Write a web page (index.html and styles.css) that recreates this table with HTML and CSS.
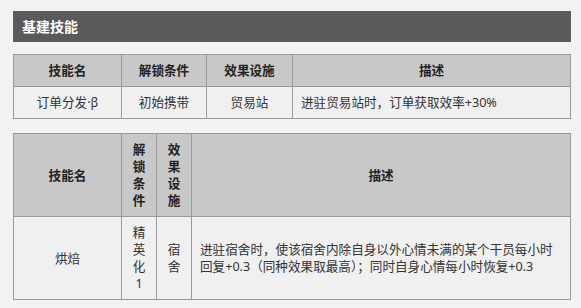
FILE: index.html
```html
<!DOCTYPE html>
<html lang="zh">
<head>
<meta charset="utf-8">
<link rel="stylesheet" href="styles.css">
</head>
<body>
<div class="page">
  <div class="title-bar">基建技能</div>
  <table class="skills t1">
    <thead>
      <tr>
        <th class="c-name">技能名</th>
        <th class="c-cond">解锁条件</th>
        <th class="c-fac">效果设施</th>
        <th>描述</th>
      </tr>
    </thead>
    <tbody>
      <tr>
        <td>订单分发·β</td>
        <td>初始携带</td>
        <td>贸易站</td>
        <td class="desc">进驻贸易站时，订单获取效率+30%</td>
      </tr>
    </tbody>
  </table>
  <table class="skills t2">
    <thead>
      <tr>
        <th class="c-name">技能名</th>
        <th class="c-narrow">解锁条件</th>
        <th class="c-narrow">效果设施</th>
        <th>描述</th>
      </tr>
    </thead>
    <tbody>
      <tr>
        <td>烘焙</td>
        <td>精英化1</td>
        <td>宿舍</td>
        <td class="desc">进驻宿舍时，使该宿舍内除自身以外心情未满的某个干员每小时回复+0.3（同种效果取最高）；同时自身心情每小时恢复+0.3</td>
      </tr>
    </tbody>
  </table>
</div>
</body>
</html>
```

FILE: styles.css
```css
html, body {
  margin: 0;
  padding: 0;
  background: #f2f2f2;
}
body {
  font-family: "Noto Sans", "Noto Sans CJK SC", sans-serif;
  font-size: 12.6px;
  line-height: 17px;
  color: #333;
}
.page {
  padding: 11px 10px 0 13px;
}
.title-bar {
  background: #5a5a5a;
  color: #fff;
  font-weight: bold;
  font-size: 14px;
  height: 31px;
  line-height: 31px;
  padding-left: 9px;
}
.skills {
  width: 100%;
  border-collapse: collapse;
  table-layout: fixed;
}
.t1 { margin-top: 12px; }
.t2 { margin-top: 14px; }
.skills th, .skills td {
  box-sizing: border-box;
  border: 1px solid #9a9a9a;
  padding: 7px 8px;
  text-align: center;
  vertical-align: middle;
}
.skills th {
  background: #c8c8c8;
  font-weight: bold;
  color: #222;
}
.skills td {
  background: #f0f0f0;
}
.skills td.desc {
  text-align: left;
}
.c-name { width: 108px; }
.c-cond { width: 85px; }
.c-fac { width: 86px; }
.c-narrow { width: 35px; }
```
